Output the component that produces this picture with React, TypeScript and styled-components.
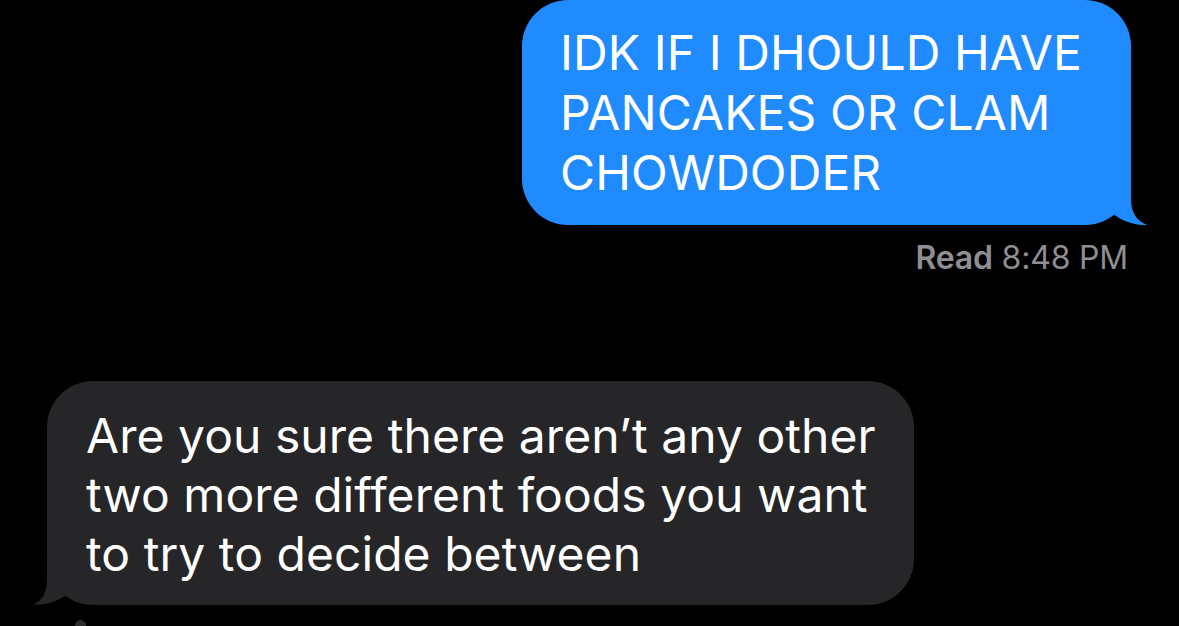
import styled, {createGlobalStyle} from "styled-components";

const GlobalStyle = createGlobalStyle`
  html, body {
    margin: 0;
    padding: 0;
    background: #000;
  }
  body {
    font-family: Inter, "Noto Sans", sans-serif;
    -webkit-font-smoothing: antialiased;
  }
`

const BLUE = "#208bff"
const GRAY = "#262629"

type Side = "left" | "right"

const Bubble = ({side, lines}: { side: Side, lines: string[] }) => {
    return (
        <BubbleBody $side={side}>
            {lines.map((line, i) => <Line key={i}>{line}</Line>)}
            <Tail $side={side} width="40" height="46" viewBox="0 0 40 46">
                {side === "right"
                    ? <path d="M24 0 L24 20 C24 34 30 42 40 46 C29 46.5 16 43 5 34 Z" fill={BLUE}/>
                    : <path d="M14 0 L14 20 C14 34 9 42 0 45.5 C11 46.5 24 43 35 35 Z" fill={GRAY}/>}
            </Tail>
        </BubbleBody>
    )
}

export default function App() {
    return (
        <Screen>
            <GlobalStyle/>
            <Row $side="right">
                <Bubble side="right" lines={["IDK IF I DHOULD HAVE", "PANCAKES OR CLAM", "CHOWDODER"]}/>
            </Row>
            <Receipt>
                <b>Read</b> 8:48 PM
            </Receipt>
            <Row $side="left" $gap={103}>
                <Bubble side="left" lines={[
                    "Are you sure there aren’t any other",
                    "two more different foods you want",
                    "to try to decide between",
                ]}/>
            </Row>
            <DotRow>
                <Dot/>
            </DotRow>
        </Screen>
    )
}

const Screen = styled.div`
  width: 1179px;
  height: 626px;
  overflow: hidden;
  background: #000;
  display: flex;
  flex-direction: column;
  padding: 0 48px 0 47px;
  box-sizing: border-box;
`

const Row = styled.div<{ $side: Side, $gap?: number }>`
  display: flex;
  justify-content: ${p => p.$side === "right" ? "flex-end" : "flex-start"};
  margin-top: ${p => p.$gap ?? 0}px;
`

const BubbleBody = styled.div<{ $side: Side }>`
  position: relative;
  box-sizing: border-box;
  display: flex;
  flex-direction: column;
  border-radius: 46px;
  color: #fff;
  font-size: 48px;
  background: ${p => p.$side === "right" ? BLUE : GRAY};
  ${p => p.$side === "right"
          ? `width: 609px; height: 225px; padding: 23px 20px 0 38px; line-height: 60px; letter-spacing: 0.1px;`
          : `width: 867px; height: 224px; padding: 25px 20px 0 39px; line-height: 59px; letter-spacing: 0.05px;`}
`

const Line = styled.span`
  white-space: nowrap;
`

const Tail = styled.svg<{ $side: Side }>`
  position: absolute;
  bottom: 0;
  ${p => p.$side === "right" ? "right: -16px;" : "left: -14px;"}
`

const Receipt = styled.div`
  align-self: flex-end;
  margin: 13px 3px 0 0;
  color: #8e8e93;
  font-size: 32px;
  line-height: 40px;
  letter-spacing: -0.2px;

  b {
    font-weight: 600;
  }
`

const DotRow = styled.div`
  display: flex;
  padding: 15px 0 0 28px;
`

const Dot = styled.div`
  width: 11px;
  height: 11px;
  border-radius: 50%;
  background: #2e2e31;
`
